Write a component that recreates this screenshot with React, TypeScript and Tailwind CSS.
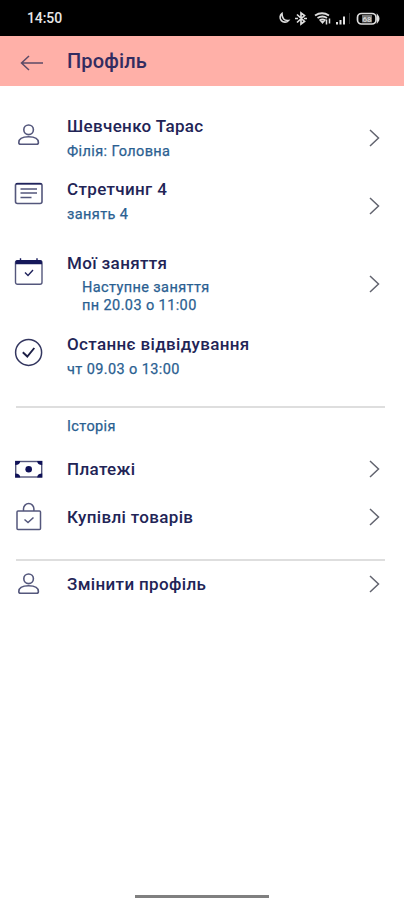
import { ReactNode } from "react";
import clsx from "clsx";

type IconProps = {
  className?: string;
}

const iconBase = "w-[30px] h-[30px] shrink-0 fill-none stroke-[#54577c]";

const UserIcon = ({className}:IconProps) => (
  <svg viewBox="0 0 30 30" className={clsx(iconBase, className)} strokeWidth={1.6}>
    <circle cx="14.6" cy="9.8" r="4.8" />
    <path d="M4.8 22.5c0-4 4.4-5.8 9.8-5.8s9.8 1.8 9.8 5.8q0 1.8-1.8 1.8h-16q-1.8 0-1.8-1.8z" />
  </svg>
)

const CardIcon = ({className}:IconProps) => (
  <svg viewBox="0 0 30 30" className={clsx(iconBase, className)} strokeWidth={1.6}>
    <rect x="1.5" y="5.5" width="26.5" height="20" rx="2" />
    <path d="M2 5.8h25.5" className="stroke-[#20235c]" />
    <path d="M6.5 11h16.5M6.5 15h16.5M6.5 19.5h11" />
  </svg>
)

const CalendarIcon = ({className}:IconProps) => (
  <svg viewBox="0 0 30 30" className={clsx(iconBase, className)} strokeWidth={1.4}>
    <rect x="1.5" y="3.8" width="26.5" height="23.5" rx="2" />
    <path d="M1.5 7.2V4.8q0-1.9 2-1.9H26q2 0 2 1.9V7.2z" className="fill-[#15185a] stroke-none" />
    <path d="M6.5 1.3v2.500M23 1.3v2.5" className="stroke-[#15185a]" />
    <path d="M11 15.5l3 3 5-5.5" className="stroke-[#20235c]" />
  </svg>
)

const CheckCircleIcon = ({className}:IconProps) => (
  <svg viewBox="0 0 30 30" className={clsx(iconBase, className)}>
    <circle cx="14.6" cy="15.4" r="13" strokeWidth={1.5} className="stroke-[#33365f]" />
    <path d="M8.8 15.2l4.5 4.3 7-8.5" strokeWidth={1.9} className="stroke-[#1c1f45]" />
  </svg>
)

const MoneyIcon = ({className}:IconProps) => (
  <svg viewBox="0 0 30 30" className={clsx(iconBase, className)} strokeWidth={1.4}>
    <rect x="1.7" y="7.5" width="26" height="15.5" />
    <g className="fill-[#0f1158] stroke-none">
      <circle cx="14.7" cy="15.2" r="3.3" />
      <path d="M1.2 7h5q0 4-5 4zM28.2 7h-5q0 4 5 4zM1.2 23.5h5q0-4-5-4zM28.2 23.5h-5q0-4 5-4z" />
    </g>
  </svg>
)

const BagIcon = ({className}:IconProps) => (
  <svg viewBox="0 0 30 30" className={clsx(iconBase, className)} strokeWidth={1.5}>
    <rect x="3" y="9" width="23.5" height="18.5" rx="1" />
    <path d="M9.5 9V6.8a5.2 5.2 0 0 1 10.4 0V9" />
    <path d="M10.5 17.5l3.5 3 5.5-5" />
  </svg>
)

const Chevron = ({className}:IconProps) => (
  <svg viewBox="0 0 12 20" className={clsx("ml-auto w-3 h-5 shrink-0 fill-none stroke-[#62646f]", className)} strokeWidth={1.5}>
    <path d="M2 2l8.5 8L2 18" />
  </svg>
)

type MenuRowProps = {
  icon: ReactNode;
  title: string;
  className: string;
  chevron?: string;
  children?: ReactNode;
}

const MenuRow = ({icon, title, className, chevron, children}:MenuRowProps) => (
  <div className={clsx("flex items-start pl-3.5 pr-6", className)}>
    {icon}
    <div className="ml-[23px] whitespace-nowrap">
      <div className="text-[17px] leading-[23px] tracking-[0.35px] font-medium text-[#222456]">{title}</div>
      {children && <div className="text-[14.5px] leading-[27px] tracking-[0.4px] text-[#2a6091] [-webkit-text-stroke:0.25px]">{children}</div>}
    </div>
    {chevron && <Chevron className={chevron} />}
  </div>
)

const StatusBar = () => (
  <div className="h-9 bg-black flex items-center pl-[27px] text-[#e8e8e8]">
    <span className="text-sm tracking-[-0.1px] font-medium">14:50</span>
    <svg viewBox="0 0 104 16" className="ml-auto mr-[22px] w-[104px] h-4 fill-none stroke-[#dedede]" strokeWidth={1.5}>
      <path d="M4 3.5a4.8 4.8 0 1 0 6.5 7q-6.5.5-6.5-7z" strokeWidth={1.6} />
      <path d="M19 4.5l7.5 7L23 14V3l3.5 2.5-7.500 7M17 8.5h3M26 8.5h3" strokeWidth={1.7} />
      <path d="M37 5.5q7-4.5 14 0M39.5 8q5-3 9.5 0M41.5 10.5q3-2 6 0" strokeWidth={1.8} />
      <path d="M44.5 14l-2.5-3h5z" className="fill-[#dedede] stroke-none" />
      <path d="M48.5 9.5v5M51.5 8.5v5" />
      <g className="fill-[#e4e4e4] stroke-none">
        <path d="M58 12h2v2.5h-2zM61.5 10h2v4.5h-2zM65 6.5h2v8h-2z" />
        <path d="M71 3h1v11h-1z" className="fill-[#333333]" />
      </g>
      <rect x="79.5" y="3.5" width="18.5" height="10.5" rx="4" strokeWidth={1.7} />
      <path d="M99.5 5.5q2.5 3.2 0 6.4z" className="fill-[#dedede]" />
      <rect x="84" y="5" width="10" height="7.5" className="fill-[#777777] stroke-none" />
      <text x="89" y="11.5" textAnchor="middle" fontSize="8" fontWeight="500" className="fill-[#dddddd] stroke-none">68</text>
    </svg>
  </div>
)

const App = () => {
  return (
    <div className="w-[404px] h-[900px] bg-white flex flex-col overflow-hidden font-['Roboto',sans-serif]">
      <StatusBar />

      <header className="h-[50px] bg-[#ffb0a8] flex items-center pl-5">
        <svg viewBox="0 0 24 20" className="w-6 h-5 mt-1 fill-none stroke-[#5c4a66]" strokeWidth={1.5}>
          <path d="M23 10H1.5M9 3L1.5 10 9 17" />
        </svg>
        <h1 className="ml-[23px] text-xl tracking-[0.15px] font-medium text-[#332c60]">Профіль</h1>
      </header>

      <main className="flex flex-col pt-[29px]">
        <MenuRow className="h-[63px]" icon={<UserIcon className="mt-[5px]" />} title="Шевченко Тарас" chevron="mt-[13px]">
          Філія: Головна
        </MenuRow>
        <MenuRow className="h-[74px]" icon={<CardIcon />} title="Стретчинг 4" chevron="mt-[18px]">
          занять 4
        </MenuRow>
        <MenuRow className="h-[81px]" icon={<CalendarIcon className="mt-[5px]" />} title="Мої заняття" chevron="mt-[22px]">
          <p className="pl-[15px] pt-1 leading-[18px]">
            Наступне заняття
            <br />
            пн 20.03 о 11:00
          </p>
        </MenuRow>
        <MenuRow className="h-[73px]" icon={<CheckCircleIcon className="mt-1" />} title="Останнє відвідування">
          чт 09.03 о 13:00
        </MenuRow>

        <hr className="ml-4 mr-[19px] border-t-2 border-[#dedede]" />
        <div className="h-[50px] pl-[67px] pt-[7px] text-[14.5px] leading-6 tracking-[0.4px] text-[#2a6091] [-webkit-text-stroke:0.25px]">Історія</div>

        <MenuRow className="h-12" icon={<MoneyIcon className="-mt-1" />} title="Платежі" chevron="mt-px" />
        <MenuRow className="h-[53px]" icon={<BagIcon className="-mt-1" />} title="Купівлі товарів" chevron="mt-px" />

        <hr className="ml-4 mr-[19px] border-t-2 border-[#dedede]" />
        <MenuRow className="h-12 pt-3" icon={<UserIcon className="-mt-1" />} title="Змінити профіль" chevron="mt-px" />
      </main>

      <div className="mt-auto mb-0.5 mx-auto w-[134px] h-[3px] bg-[#808080]" />
    </div>
  )
}

export default App
